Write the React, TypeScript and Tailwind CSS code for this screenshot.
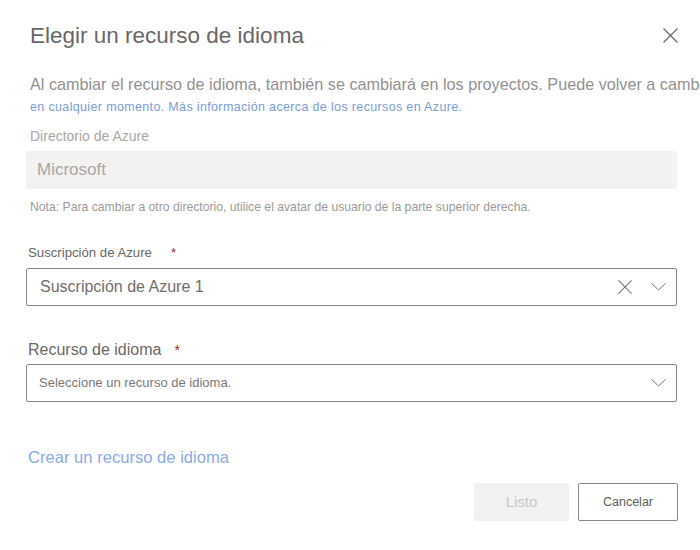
import React from "react";

const Chevron = () => (
  <svg width="15" height="8" viewBox="0 0 15 8" fill="none">
    <path d="M0.5 0.5 L7.5 7 L14.5 0.5" stroke="#7a7876" strokeWidth="1" />
  </svg>
);

const XIcon = ({ size = 15, color = "#6b6967" }: { size?: number; color?: string }) => (
  <svg width={size} height={size} viewBox="0 0 15 15" fill="none">
    <path d="M0.5 0.5 L14.5 14.5 M14.5 0.5 L0.5 14.5" stroke={color} strokeWidth="1.2" />
  </svg>
);

export default function App() {
  return (
    <div
      className="w-[700px] h-[550px] bg-white overflow-hidden relative"
      style={{ fontFamily: '"Liberation Sans", Arial, sans-serif' }}
    >
      <div className="flex flex-col pl-[26px] pr-[22px]">
        <div className="flex items-center justify-between h-[28px] mt-[22px]">
          <h1 className="text-[22.5px] leading-[28px] text-[#6a6866] ml-[4px]">Elegir un recurso de idioma</h1>
          <div className="mt-[-2px]">
            <XIcon size={15} />
          </div>
        </div>

        <div className="mt-[23px] w-[674px] overflow-hidden whitespace-nowrap text-[16.2px] leading-[22px] text-[#939190] ml-[4px]">
          Al cambiar el recurso de idioma, también se cambiará en los proyectos. Puede volver a cambi
        </div>
        <div className="mt-[4px] whitespace-nowrap text-[12.5px] leading-[16px] tracking-[0.35px] text-[#7a9cd8] ml-[4px]">
          en cualquier momento. Más información acerca de los recursos en Azure.
        </div>

        <div className="mt-[12px] text-[14px] leading-[18px] text-[#aaa8a6] ml-[4px]">Directorio de Azure</div>
        <div className="mt-[6px] h-[38px] w-[651px] bg-[#f3f2f1] rounded-[2px] flex items-center pl-[11px]">
          <span className="text-[17px] text-[#a8a6a4]">Microsoft</span>
        </div>
        <div className="mt-[10px] text-[12.2px] leading-[16px] text-[#9d9b99] ml-[4px]">
          Nota: Para cambiar a otro directorio, utilice el avatar de usuario de la parte superior derecha.
        </div>

        <div className="mt-[30px] flex items-center ml-[2px] h-[16px]">
          <span className="text-[13.2px] text-[#6a6866]">Suscripción de Azure</span>
          <span className="ml-[19px] text-[13px] text-[#a4262c]">*</span>
        </div>
        <div className="mt-[7px] h-[38px] w-[651px] border border-[#8a8886] rounded-[2px] flex items-center pl-[13px] pr-[10px]">
          <span className="text-[16px] text-[#706e6c] flex-1">Suscripción de Azure 1</span>
          <XIcon size={14} color="#7a7876" />
          <div className="ml-[19px]">
            <Chevron />
          </div>
        </div>

        <div className="mt-[34px] flex items-center ml-[2px] h-[20px]">
          <span className="text-[16px] text-[#6a6866]">Recurso de idioma</span>
          <span className="ml-[13px] text-[14px] text-[#a4262c]">*</span>
        </div>
        <div className="mt-[4px] h-[38px] w-[651px] border border-[#8a8886] rounded-[2px] flex items-center pl-[12px] pr-[10px]">
          <span className="text-[13px] text-[#7a7876] flex-1">Seleccione un recurso de idioma.</span>
          <Chevron />
        </div>

        <div className="mt-[46px] text-[16.6px] leading-[20px] text-[#8aabe6] ml-[2px]">Crear un recurso de idioma</div>

        <div className="mt-[15px] flex justify-end gap-[9px]">
          <div className="w-[95px] h-[38px] bg-[#f3f2f1] rounded-[2px] flex items-center justify-center text-[15px] text-[#c8c6c4]">
            Listo
          </div>
          <div className="w-[100px] h-[38px] border border-[#8a8886] rounded-[2px] flex items-center justify-center text-[12.5px] text-[#605e5c]">
            Cancelar
          </div>
        </div>
      </div>
    </div>
  );
}
